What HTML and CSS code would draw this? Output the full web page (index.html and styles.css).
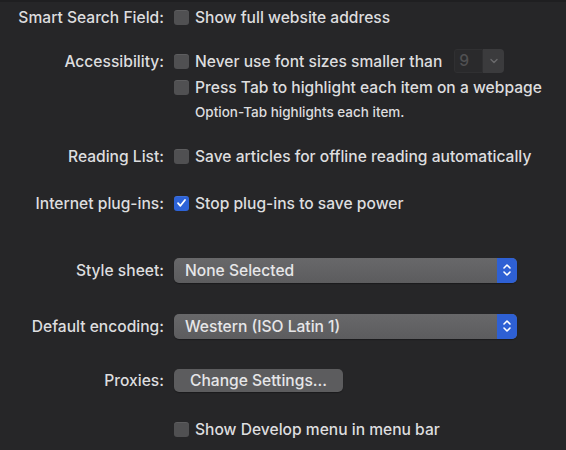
FILE: index.html
```html
<!DOCTYPE html>
<html>
<head>
<meta charset="utf-8">
<link rel="stylesheet" href="styles.css">
</head>
<body>
<div class="prefs">
  <div class="row r1">
    <div class="label">Smart Search Field:</div>
    <div class="ctl"><span class="cb"></span><span>Show full website address</span></div>
  </div>
  <div class="row r2">
    <div class="label">Accessibility:</div>
    <div class="ctl"><span class="cb"></span><span>Never use font sizes smaller than</span>
      <span class="combo"><span class="combo-field">9</span><span class="combo-btn"><svg width="10" height="6" viewBox="0 0 10 6"><path d="M2 1.5 L5 4.5 L8 1.5" fill="none" stroke="#6a6a6c" stroke-width="1.4" stroke-linecap="round" stroke-linejoin="round"/></svg></span></span>
    </div>
  </div>
  <div class="row r3">
    <div class="label"></div>
    <div class="ctl"><span class="cb"></span><span>Press Tab to highlight each item on a webpage</span></div>
  </div>
  <div class="row r4">
    <div class="label"></div>
    <div class="ctl note">Option-Tab highlights each item.</div>
  </div>
  <div class="row r5">
    <div class="label">Reading List:</div>
    <div class="ctl"><span class="cb"></span><span>Save articles for offline reading automatically</span></div>
  </div>
  <div class="row r6">
    <div class="label">Internet plug-ins:</div>
    <div class="ctl"><span class="cb on"><svg width="11" height="10" viewBox="0 0 11 10"><path d="M2 5.2 L4.4 7.8 L9 2" fill="none" stroke="#fff" stroke-width="1.8" stroke-linecap="round" stroke-linejoin="round"/></svg></span><span>Stop plug-ins to save power</span></div>
  </div>
  <div class="row r7">
    <div class="label">Style sheet:</div>
    <div class="ctl"><div class="popup"><span class="popup-text">None Selected</span><span class="stepper"><svg width="10" height="14" viewBox="0 0 10 14"><path d="M2 5 L5 2 L8 5 M2 9 L5 12 L8 9" fill="none" stroke="#fff" stroke-width="1.6" stroke-linecap="round" stroke-linejoin="round"/></svg></span></div></div>
  </div>
  <div class="row r8">
    <div class="label">Default encoding:</div>
    <div class="ctl"><div class="popup"><span class="popup-text">Western (ISO Latin 1)</span><span class="stepper"><svg width="10" height="14" viewBox="0 0 10 14"><path d="M2 5 L5 2 L8 5 M2 9 L5 12 L8 9" fill="none" stroke="#fff" stroke-width="1.6" stroke-linecap="round" stroke-linejoin="round"/></svg></span></div></div>
  </div>
  <div class="row r9">
    <div class="label">Proxies:</div>
    <div class="ctl"><span class="btn">Change Settings...</span></div>
  </div>
  <div class="row r10">
    <div class="label"></div>
    <div class="ctl"><span class="cb"></span><span>Show Develop menu in menu bar</span></div>
  </div>
</div>
</body>
</html>
```

FILE: styles.css
```css
html, body {
  margin: 0;
  padding: 0;
  background: #262628;
  height: 100%;
}
body {
  border-top: 2px solid #1f1f21;
  box-sizing: border-box;
  font-family: Inter, "Liberation Sans", Arial, sans-serif;
  font-size: 15.6px;
  font-weight: 500;
  color: #dddddf;
  overflow: hidden;
}
.prefs {
  display: flex;
  flex-direction: column;
}
.row {
  display: grid;
  grid-template-columns: 164px 1fr;
  column-gap: 10px;
  align-items: center;
  height: 24px;
}
.label {
  text-align: right;
  white-space: nowrap;
}
.ctl {
  display: flex;
  align-items: center;
  gap: 6px;
  white-space: nowrap;
}
.r1 { margin-top: 3px; }
.r2 { margin-top: 20px; }
.r3 { margin-top: 2px; }
.r4 { margin-top: 5px; height: 16px; }
.r5 { margin-top: 24px; }
.r6 { margin-top: 23px; }
.r7 { margin-top: 42px; height: 26px; }
.r8 { margin-top: 30px; height: 26px; }
.r9 { margin-top: 29px; }
.r10 { margin-top: 25px; }
.note {
  font-size: 13.5px;
  padding-left: 21px;
}
.cb {
  width: 15px;
  height: 15px;
  border-radius: 3px;
  background: #505052;
  box-shadow: inset 0 1px 0 rgba(255,255,255,0.08);
  flex: none;
  display: flex;
  align-items: center;
  justify-content: center;
}
.cb.on {
  background: #2d63d8;
}
.combo {
  display: flex;
  margin-left: 6px;
  height: 24px;
}
.combo-field {
  width: 29px;
  box-sizing: border-box;
  border: 1px solid #303032;
  background: #2a2a2c;
  color: #505052;
  padding-left: 4px;
  line-height: 22px;
  border-radius: 3px 0 0 3px;
}
.combo-btn {
  width: 21px;
  background: #3b3b3d;
  border-radius: 0 4px 4px 0;
  display: flex;
  align-items: center;
  justify-content: center;
}
.popup {
  width: 343px;
  height: 25px;
  border-radius: 5px;
  background: linear-gradient(#68686a, #5c5c5e);
  display: flex;
  align-items: center;
  justify-content: space-between;
  box-shadow: 0 1px 1px rgba(0,0,0,0.3);
}
.popup-text {
  padding-left: 11px;
  color: #e6e6e8;
}
.stepper {
  width: 20px;
  height: 25px;
  background: #2e60d4;
  border-radius: 0 5px 5px 0;
  display: flex;
  align-items: center;
  justify-content: center;
}
.btn {
  display: inline-block;
  width: 169px;
  height: 23px;
  line-height: 23px;
  text-align: center;
  background: #5c5c5e;
  border-radius: 5px;
  color: #e6e6e8;
  box-shadow: 0 1px 1px rgba(0,0,0,0.3);
}
```
